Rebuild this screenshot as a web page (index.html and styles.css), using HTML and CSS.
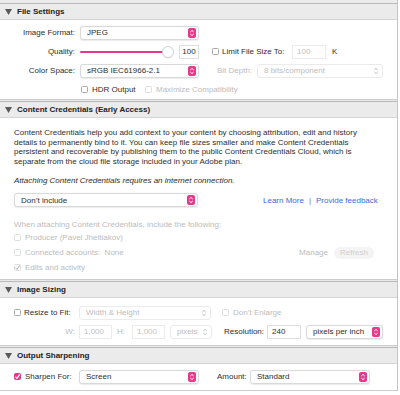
FILE: index.html
```html
<!DOCTYPE html>
<html>
<head>
<meta charset="utf-8">
<link rel="stylesheet" href="styles.css">
</head>
<body>
<div class="panel">
  <div class="strip"></div>

  <section class="sec">
    <div class="head"><svg class="tri" width="7" height="6" viewBox="0 0 7 6"><polygon points="0,0 7,0 3.5,6" fill="#5a5a5a"/></svg><span>File Settings</span></div>
    <div class="body b1">
      <div class="row">
        <span class="lbl">Image Format:</span>
        <div class="sel w119"><span>JPEG</span><svg class="step" width="8" height="10" viewBox="0 0 8 10"><rect width="8" height="10" rx="2" fill="#e6398b"/><path d="M2.3 4 L4 2.4 L5.7 4 M2.3 6 L4 7.6 L5.7 6" stroke="#fff" stroke-width="1" fill="none"/></svg></div>
      </div>
      <div class="row">
        <span class="lbl">Quality:</span>
        <div class="slider"><div class="track"></div><div class="thumb"></div></div>
        <div class="inp w20 ml5 num">100</div>
        <span class="cb ml13"></span>
        <span class="ml3 w70">Limit File Size To:</span>
        <div class="inp w34 dis">100</div>
        <span class="ml6">K</span>
      </div>
      <div class="row">
        <span class="lbl">Color Space:</span>
        <div class="sel w119"><span>sRGB IEC61966-2.1</span><svg class="step" width="8" height="10" viewBox="0 0 8 10"><rect width="8" height="10" rx="2" fill="#e6398b"/><path d="M2.3 4 L4 2.4 L5.7 4 M2.3 6 L4 7.6 L5.7 6" stroke="#fff" stroke-width="1" fill="none"/></svg></div>
        <span class="ml18 w40 dtext">Bit Depth:</span>
        <div class="sel w126 dsel"><span>8 bits/component</span><svg class="step" width="8" height="10" viewBox="0 0 8 10"><path d="M2.3 4 L4 2.4 L5.7 4 M2.3 6 L4 7.6 L5.7 6" stroke="#b5b5b5" stroke-width="0.9" fill="none"/></svg></div>
      </div>
      <div class="row">
        <span class="cb ml81"></span>
        <span class="ml4 w53">HDR Output</span>
        <span class="cb dcb"></span>
        <span class="ml4 dtext">Maximize Compatibility</span>
      </div>
    </div>
  </section>

  <section class="sec">
    <div class="head"><svg class="tri" width="7" height="6" viewBox="0 0 7 6"><polygon points="0,0 7,0 3.5,6" fill="#5a5a5a"/></svg><span>Content Credentials (Early Access)</span></div>
    <div class="body b2">
      <p class="para">Content Credentials help you add context to your content by choosing attribution, edit and history<br>details to permanently bind to it. You can keep file sizes smaller and make Content Credentials<br>persistent and recoverable by publishing them to the public Content Credentials Cloud, which is<br>separate from the cloud file storage included in your Adobe plan.</p>
      <p class="ital">Attaching Content Credentials requires an internet connection.</p>
      <div class="row r-sel">
        <div class="sel w184"><span>Don’t include</span><svg class="step" width="8" height="10" viewBox="0 0 8 10"><rect width="8" height="10" rx="2" fill="#e6398b"/><path d="M2.3 4 L4 2.4 L5.7 4 M2.3 6 L4 7.6 L5.7 6" stroke="#fff" stroke-width="1" fill="none"/></svg></div>
        <span class="link ml65">Learn More</span>
        <span class="bar">|</span>
        <span class="link">Provide feedback</span>
      </div>
      <p class="when">When attaching Content Credentials, include the following:</p>
      <div class="row">
        <span class="cb dcb"></span><span class="ml4 dtext">Producer (Pavel Jheltiakov)</span>
      </div>
      <div class="row">
        <span class="cb dcb"></span><span class="ml4 dtext">Connected accounts:&nbsp;&nbsp;None</span>
        <span class="dtext manage">Manage</span>
        <span class="refresh">Refresh</span>
      </div>
      <div class="row">
        <span class="cb dcb"><svg width="7" height="7" viewBox="0 0 7 7"><path d="M1.3 3.6 L2.9 5.3 L5.8 1.4" stroke="#b0b0b0" stroke-width="1" fill="none"/></svg></span><span class="ml4 dtext">Edits and activity</span>
      </div>
    </div>
  </section>

  <section class="sec">
    <div class="head"><svg class="tri" width="7" height="6" viewBox="0 0 7 6"><polygon points="0,0 7,0 3.5,6" fill="#5a5a5a"/></svg><span>Image Sizing</span></div>
    <div class="body b3">
      <div class="row">
        <span class="cb ml14"></span>
        <span class="ml3 w55">Resize to Fit:</span>
        <div class="sel w132 dsel"><span>Width &amp; Height</span><svg class="step" width="8" height="10" viewBox="0 0 8 10"><path d="M2.3 4 L4 2.4 L5.7 4 M2.3 6 L4 7.6 L5.7 6" stroke="#b5b5b5" stroke-width="0.9" fill="none"/></svg></div>
        <span class="cb dcb ml11"></span>
        <span class="ml4 dtext">Don’t Enlarge</span>
      </div>
      <div class="row">
        <span class="lbl dtext wl">W:</span>
        <div class="inp w33 dis">1,000</div>
        <span class="w15 ml5 dtext">H:</span>
        <div class="inp w33 dis">1,000</div>
        <div class="sel w42 dsel ml5"><span>pixels</span><svg class="step" width="8" height="10" viewBox="0 0 8 10"><path d="M2.3 4 L4 2.4 L5.7 4 M2.3 6 L4 7.6 L5.7 6" stroke="#b5b5b5" stroke-width="0.9" fill="none"/></svg></div>
        <span class="ml12 w43">Resolution:</span>
        <div class="inp w34">240</div>
        <div class="sel w77 ml5"><span>pixels per inch</span><svg class="step" width="8" height="10" viewBox="0 0 8 10"><rect width="8" height="10" rx="2" fill="#e6398b"/><path d="M2.3 4 L4 2.4 L5.7 4 M2.3 6 L4 7.6 L5.7 6" stroke="#fff" stroke-width="1" fill="none"/></svg></div>
      </div>
    </div>
  </section>

  <section class="sec">
    <div class="head"><svg class="tri" width="7" height="6" viewBox="0 0 7 6"><polygon points="0,0 7,0 3.5,6" fill="#5a5a5a"/></svg><span>Output Sharpening</span></div>
    <div class="body b4">
      <div class="row">
        <span class="cb on ml14"><svg width="7" height="7" viewBox="0 0 7 7"><path d="M1.3 3.6 L2.9 5.3 L5.8 1.4" stroke="#fff" stroke-width="1.1" fill="none"/></svg></span>
        <span class="ml4 w54">Sharpen For:</span>
        <div class="sel w120"><span>Screen</span><svg class="step" width="8" height="10" viewBox="0 0 8 10"><rect width="8" height="10" rx="2" fill="#e6398b"/><path d="M2.3 4 L4 2.4 L5.7 4 M2.3 6 L4 7.6 L5.7 6" stroke="#fff" stroke-width="1" fill="none"/></svg></div>
        <span class="ml18 w33">Amount:</span>
        <div class="sel w120"><span>Standard</span><svg class="step" width="8" height="10" viewBox="0 0 8 10"><rect width="8" height="10" rx="2" fill="#e6398b"/><path d="M2.3 4 L4 2.4 L5.7 4 M2.3 6 L4 7.6 L5.7 6" stroke="#fff" stroke-width="1" fill="none"/></svg></div>
      </div>
    </div>
  </section>
</div>
</body>
</html>
```

FILE: styles.css
```css
html, body { margin: 0; padding: 0; background: #ffffff; }
body {
  font-family: "Liberation Sans", Arial, sans-serif;
  font-size: 8px;
  color: #2e2e2e;
  width: 400px;
  height: 395px;
  overflow: hidden;
}
.panel {
  width: 397px;
  border-right: 1px solid #c4c4c4;
  background: #e9e9e9;
}
.strip { height: 3px; background: #ececec; }
.sec { margin-bottom: 1px; }
.head {
  box-sizing: border-box;
  height: 17px;
  border-top: 1px solid #b9b9b9;
  border-bottom: 1px solid #d6d6d6;
  background: #ebebeb;
  display: flex;
  align-items: center;
  padding-left: 5px;
  font-weight: bold;
  color: #222;
}
.tri { margin-right: 5px; }
.body {
  background: #fff;
  border-bottom: 1px solid #cdcdcd;
  display: flex;
  flex-direction: column;
}
.b1 { padding: 5px 0 2px; gap: 4px; }
.b2 { padding: 10px 0 4px 14px; }
.b3 { padding: 7px 0 6px; gap: 4px; }
.b4 { padding: 5px 0 6px; }
.row { display: flex; align-items: center; height: 15px; white-space: nowrap; }
.lbl { width: 75px; text-align: right; margin-right: 5px; flex: none; }
.wl { margin-right: 4px; }
.sel {
  box-sizing: border-box;
  height: 14px;
  background: #fff;
  border: 1px solid #d9d9d9;
  border-radius: 3px;
  box-shadow: 0 0.5px 1px rgba(0,0,0,0.08);
  display: flex;
  align-items: center;
  justify-content: space-between;
  padding: 0 2px 0 6px;
  flex: none;
}
.dsel { color: #bdbdbd; border-color: #ebebeb; box-shadow: none; }
.step { flex: none; }
.inp {
  box-sizing: border-box;
  height: 14px;
  border: 1px solid #dedede;
  background: #fff;
  display: flex;
  align-items: center;
  padding-left: 4px;
  flex: none;
}
.inp.num { justify-content: center; padding-left: 0; }
.inp.dis { color: #c2c2c2; border-color: #ececec; }
.slider { width: 94px; display: flex; align-items: center; flex: none; }
.track { flex: 1; height: 2px; background: #e6398b; border-radius: 1px; }
.thumb {
  width: 12px; height: 12px; border-radius: 50%;
  background: #fff; border: 1px solid #d4d4d4; box-sizing: border-box;
  box-shadow: 0 0.5px 1px rgba(0,0,0,0.1);
  margin-left: -2px;
}
.cb {
  box-sizing: border-box;
  width: 7px; height: 7px;
  border: 1px solid #a8a8a8;
  border-radius: 1.5px;
  background: #fff;
  flex: none;
  display: flex; align-items: center; justify-content: center;
}
.cb svg { flex: none; }
.cb.dcb { border-color: #dedede; }
.cb.on { background: #e6398b; border-color: #e6398b; }
.dtext { color: #bcbcbc; }
.para { margin: 0; line-height: 9.5px; white-space: nowrap; }
.ital { margin: 10px 0 0; line-height: 9.5px; font-style: italic; }
.r-sel { margin-top: 7px; }
.link { color: #3d6ae0; }
.bar { color: #777; margin: 0 5px 0 5px; }
.when { margin: 12px 0 0; line-height: 10px; color: #bcbcbc; }
.when + .row { margin-top: 0.5px; }
.manage { margin-left: auto; }
.refresh {
  margin: 0 23px 0 6px;
  background: #f4f4f4;
  color: #cfcfcf;
  border-radius: 6px;
  padding: 0 6px;
  height: 12px;
  line-height: 12px;
}
.ml3 { margin-left: 3px; } .ml4 { margin-left: 4px; } .ml5 { margin-left: 5px; }
.ml6 { margin-left: 6px; } .ml7 { margin-left: 7px; } .ml11 { margin-left: 11px; }
.ml12 { margin-left: 12px; } .ml13 { margin-left: 13px; } .ml14 { margin-left: 14px; }
.ml18 { margin-left: 18px; } .ml65 { margin-left: 65px; } .ml81 { margin-left: 81px; }
.w15 { width: 15px; flex: none; } .w20 { width: 20px; } .w33 { width: 33px; flex: none; }
.w34 { width: 34px; flex: none; } .w40 { width: 40px; flex: none; } .w42 { width: 42px; }
.w43 { width: 43px; flex: none; } .w53 { width: 53px; flex: none; } .w54 { width: 54px; flex: none; }
.w55 { width: 55px; flex: none; } .w70 { width: 70px; flex: none; } .w77 { width: 77px; }
.w119 { width: 119px; } .w120 { width: 120px; } .w126 { width: 126px; }
.w132 { width: 132px; } .w184 { width: 184px; }
```
